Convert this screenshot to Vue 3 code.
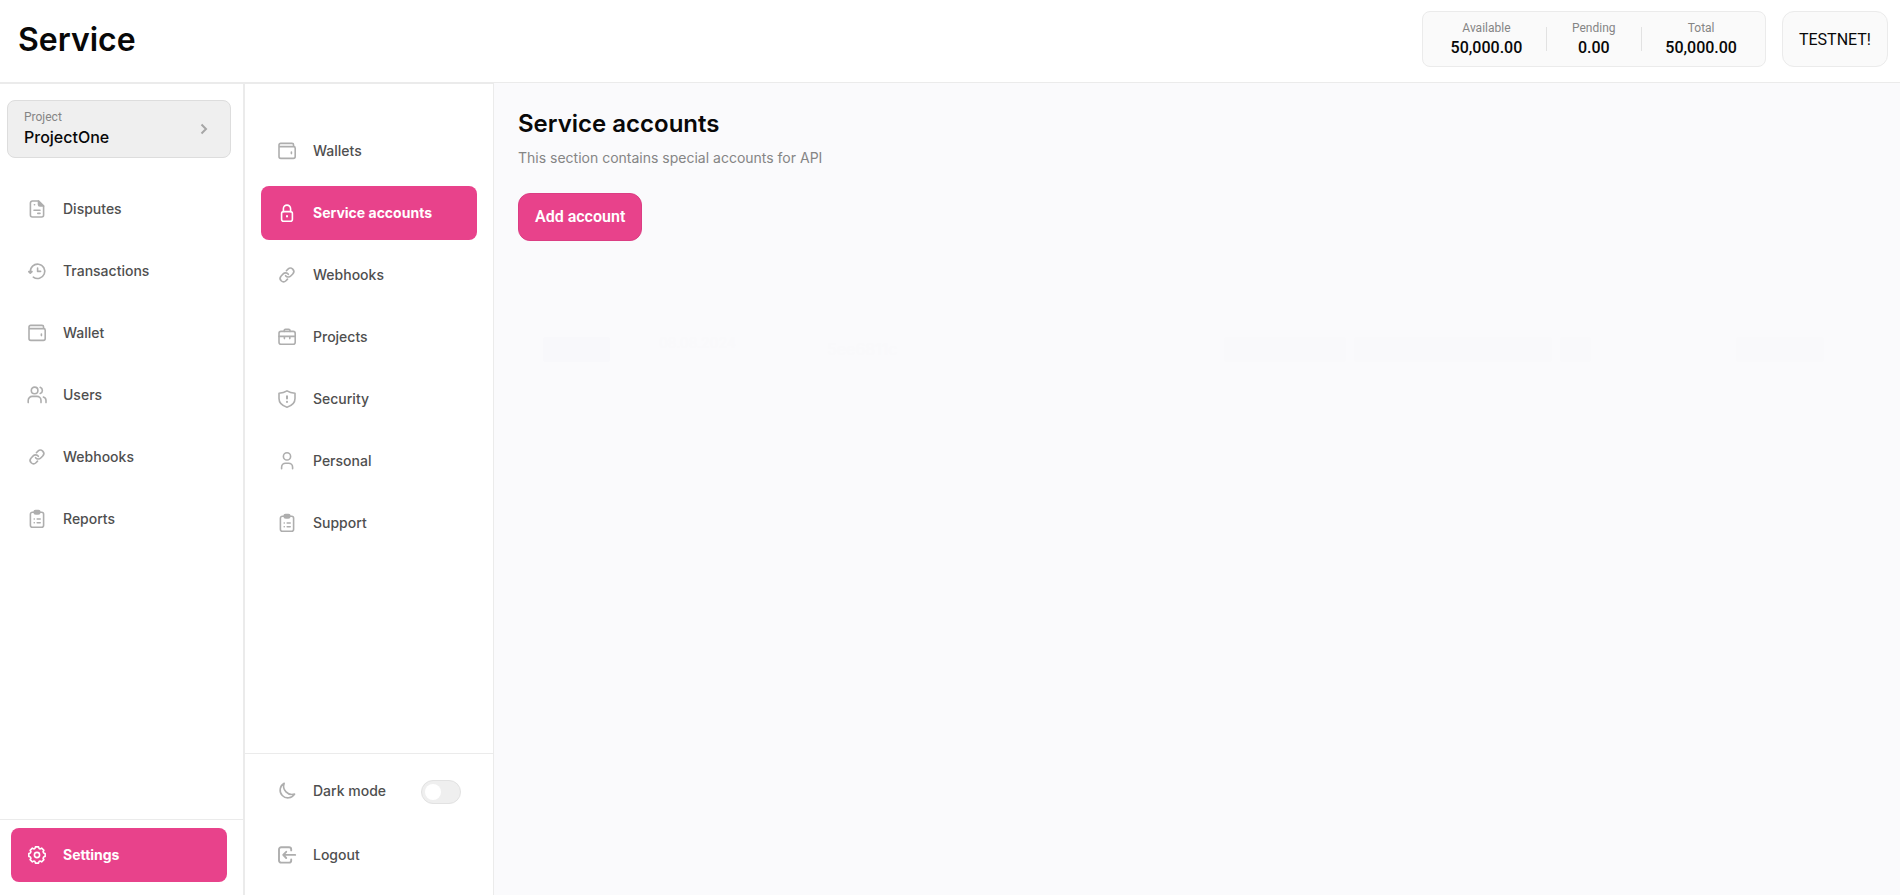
<script setup>
import { ref } from 'vue'

const gearRim = (() => {
  const points = []
  for (let tooth = 0; tooth < 8; tooth++) {
    for (const [offset, radius] of [[-17, 6.9], [-11, 8.3], [11, 8.3], [17, 6.9]]) {
      const angle = ((tooth * 45 + offset) * Math.PI) / 180
      points.push(`${(10 + radius * Math.sin(angle)).toFixed(2)} ${(10 - radius * Math.cos(angle)).toFixed(2)}`)
    }
  }
  return `M${points.join('L')}z`
})()

const icons = {
  file: '<path d="M11.5 2H5.4a2 2 0 0 0-2 2v12a2 2 0 0 0 2 2h9.2a2 2 0 0 0 2-2V7z"/><path d="M11.5 2v3.6A1.4 1.4 0 0 0 12.9 7h3.7z" fill="currentColor"/><path d="M7.4 5.8h.2M7 11.2h6M10.8 14.4H13"/>',
  history: '<path d="M3.4 11a7.2 7.2 0 1 1 2.9 5.1"/><path d="M1.8 10.6 3.3 12.2 5 10.6z" fill="currentColor"/><path d="M10.6 7v3.4h3"/>',
  wallet: '<path d="M16.6 5.6V4A1.6 1.6 0 0 0 15 2.4H3.6A1.6 1.6 0 0 0 2 4v11.6a1.8 1.8 0 0 0 1.8 1.8h12.6a1.8 1.8 0 0 0 1.8-1.8V7.2a1.6 1.6 0 0 0-1.6-1.6H2.2"/><path d="M14.4 11v1.6"/>',
  users: '<circle cx="7.6" cy="5.4" r="3.3"/><path d="M1.2 17.6v-2.2a4 4 0 0 1 4-4H10a4 4 0 0 1 4 4v2.2M13.2 2.3a3.3 3.3 0 0 1 0 6.2M16.4 12a3.8 3.8 0 0 1 2.6 3.6v2"/>',
  link: '<g transform="translate(1.8 1.8) scale(.68)" stroke-width="2.4"><path d="M10 13a5 5 0 0 0 7.54.54l3-3a5 5 0 0 0-7.07-7.07l-2.3 2.3"/><path d="M14 11a5 5 0 0 0-7.54-.54l-3 3a5 5 0 0 0 7.07 7.07l2.3-2.3"/></g>',
  clipboard: '<path d="M7 3.2H5.4a2 2 0 0 0-2 2v11a2 2 0 0 0 2 2h9.2a2 2 0 0 0 2-2v-11a2 2 0 0 0-2-2H13"/><path d="M7.2 2.8c0-.8.5-1.2 1.3-1.2h3c.8 0 1.3.4 1.3 1.2v.6c0 1-.7 1.6-1.6 1.6H8.8c-.9 0-1.6-.6-1.6-1.6z" fill="currentColor"/><path d="M7.2 10h.1M10.2 10h3M7.2 13.8h.1M10.2 13.8h3"/>',
  lock: '<rect x="4.6" y="8.6" width="10.8" height="9.6" rx="2"/><path d="M6.4 8.6V5.7a3.6 3.6 0 0 1 7.2 0v2.9"/><path d="M10 13v.6" stroke-width="2"/>',
  briefcase: '<rect x="2" y="4.4" width="16.2" height="12.8" rx="2"/><path d="M7.2 4.4v-.8c0-.8.5-1.3 1.3-1.3h3.2c.8 0 1.3.5 1.3 1.3v.8M2 9.4h16M7.4 10v1.6M12.8 10v1.6"/>',
  shield: '<path d="M10 1.8c2.2 1.4 5 2.2 8 2.4v5.4c0 4.1-3.3 7.3-8 8.6-4.7-1.3-8-4.5-8-8.6V4.2c3-.2 5.8-1 8-2.4z"/><path d="M10 7.2v2.2M10 12.8v.1" stroke-width="2"/>',
  person: '<circle cx="10" cy="5.4" r="3.6"/><path d="M4.6 17.8v-1.6a4 4 0 0 1 4-4h3a4 4 0 0 1 4 4v1.6"/>',
  gear: `<circle cx="10" cy="10" r="2.6"/><path d="${gearRim}"/>`,
  moon: '<path d="M7.2 2.2a7.8 7.8 0 1 0 10.4 10.9A8.4 8.4 0 0 1 7.2 2.2z"/>',
  logout: '<path d="M14.2 5.4V4.4a2.2 2.2 0 0 0-2.2-2.2H4.2A2.2 2.2 0 0 0 2 4.4v11a2.2 2.2 0 0 0 2.2 2.2H12a2.2 2.2 0 0 0 2.2-2.2v-1M6.6 9.9h11.6M9.2 6.8 6.2 9.9l3 3.1" stroke-width="1.9"/>'
}
const mainNav = [['Disputes', 'file'], ['Transactions', 'history'], ['Wallet', 'wallet'], ['Users', 'users'], ['Webhooks', 'link'], ['Reports', 'clipboard']]
const subNav = [['Wallets', 'wallet'], ['Service accounts', 'lock'], ['Webhooks', 'link'], ['Projects', 'briefcase'], ['Security', 'shield'], ['Personal', 'person'], ['Support', 'clipboard']]
const balances = [['Available', '50,000.00'], ['Pending', '0.00'], ['Total', '50,000.00']]
const dark = ref(false)
</script>

<template>
  <div class="app">
    <header class="top">
      <h1>Service</h1>
      <dl class="balances">
        <div v-for="[name, amount] in balances" :key="name" class="balance">
          <dt>{{ name }}</dt>
          <dd>{{ amount }}</dd>
        </div>
      </dl>
      <div class="network">TESTNET!</div>
    </header>
    <div class="body">
      <aside class="side main-side">
        <button class="project" type="button">
          <span><small>Project</small><b>ProjectOne</b></span>
          <svg width="8" height="12" viewBox="0 0 8 12"><path d="m1.5 1.5 4.5 4.5-4.5 4.5" /></svg>
        </button>
        <nav class="nav">
          <a v-for="[label, icon] in mainNav" :key="label" class="item" href="#">
            <svg class="icon" viewBox="0 0 20 20" v-html="icons[icon]"></svg>{{ label }}
          </a>
        </nav>
        <div class="foot">
          <a class="item active" href="#"><svg class="icon" viewBox="0 0 20 20" v-html="icons.gear"></svg>Settings</a>
        </div>
      </aside>
      <aside class="side sub-side">
        <nav class="nav">
          <a v-for="[label, icon] in subNav" :key="label" class="item" :class="{ active: icon === 'lock' }" href="#">
            <svg class="icon" viewBox="0 0 20 20" v-html="icons[icon]"></svg>{{ label }}
          </a>
        </nav>
        <div class="foot">
          <label class="item"><svg class="icon" viewBox="0 0 20 20" v-html="icons.moon"></svg>Dark mode<input v-model="dark" class="switch" type="checkbox" role="switch" /></label>
          <button class="item" type="button"><svg class="icon" viewBox="0 0 20 20" v-html="icons.logout"></svg>Logout</button>
        </div>
      </aside>
      <main class="content">
        <h2>Service accounts</h2>
        <p>This section contains special accounts for API</p>
        <button class="add" type="button">Add account</button>
        <div class="fading">
          <i class="bar status"></i>
          <span class="date">08.08.2024</span>
          <span>5ee6811c</span>
          <div class="bars"><i class="bar mid"></i><i class="bar long"></i><i class="bar tiny"></i></div>
          <i class="bar end"></i>
        </div>
      </main>
    </div>
  </div>
</template>

<style>
body { margin: 0; }
</style>
<style scoped>
* { box-sizing: border-box; }
.app { display: flex; flex-direction: column; min-height: 100vh; background: #fff; color: #080808; font-family: Inter, sans-serif; }
h1, h2, p, dl, dd { margin: 0; }
button { font-family: inherit; }
.top { display: flex; align-items: center; gap: 16px; height: 83px; padding: 0 12px 4px 18px; border-bottom: 1px solid #ebebeb; }
h1 { margin-right: auto; padding-top: 2px; font: 600 32px/40px Inter, sans-serif; }
.balances { display: flex; align-items: center; height: 56px; padding: 2px 4px 0; border: 1px solid #ebebeb; border-radius: 8px; background: #fafafa; }
.balance { padding: 0 24px; text-align: center; position: relative; }
.balance + .balance::before { content: ""; position: absolute; left: 0; top: 7px; height: 24px; border-left: 1px solid #e2e2e2; }
dt { color: #858585; font: 400 12px/16px Roboto, sans-serif; }
.balance:nth-child(2) { min-width: 95px; }
dd { font: 500 16px/24px Roboto, sans-serif; }
.network { height: 56px; padding: 2px 16px 0; border: 1px solid #ebebeb; border-radius: 12px; background: #fafafa; font: 400 16px/52px Roboto, sans-serif; }
.body { display: flex; flex: 1; }
.side { display: flex; flex-direction: column; flex: none; }
.main-side { width: 245px; border-top: 1px solid #ebebeb; border-right: 2px solid #ebebeb; }
.sub-side { width: 249px; border-top: 1px solid #ebebeb; border-right: 1px solid #ebebeb; }
.project { display: flex; align-items: center; justify-content: space-between; height: 58px; margin: 16px 12px 0 7px; padding: 0 22px 0 16px; border: 1px solid #ddd; border-radius: 8px; background: #efefef; color: #080808; text-align: left; }
.project small, .project b { display: block; }
.project small { color: #858585; font: 400 12px/16px Roboto, sans-serif; }
.project b { font: 500 16px/24px Inter, sans-serif; }
.project svg { fill: none; stroke: #a6a6a6; stroke-width: 2; }
.nav { display: flex; flex-direction: column; gap: 8px; padding: 24px 16px 0 11px; }
.sub-side .nav { padding: 40px 16px 0; }
.item { display: flex; align-items: center; gap: 16px; height: 54px; width: 100%; padding: 0 16px; border: 0; border-radius: 8px; background: none; color: #4f4f4f; font: 500 14px/20px Inter, sans-serif; text-decoration: none; }
.icon { width: 20px; height: 20px; flex: none; color: #aeaeae; fill: none; stroke: currentColor; stroke-width: 1.6; stroke-linecap: round; stroke-linejoin: round; }
.active { background: #e8428b; color: #fff; font-weight: 700; }
.active .icon { color: #fff; }
.foot { margin-top: auto; padding: 8px 16px 13px 11px; border-top: 1px solid #ebebeb; }
.sub-side .foot { display: flex; flex-direction: column; gap: 10px; padding: 10px 16px 13px; }
.switch { appearance: none; width: 40px; height: 24px; margin: 2px 0 0 auto; padding: 3px; border: 1px solid #e2e2e2; border-radius: 12px; background: #efefef; }
.switch::before { content: ""; display: block; width: 16px; height: 16px; border-radius: 50%; background: #fff; }
.switch:checked::before { margin-left: auto; }
.content { flex: 1; min-width: 0; padding: 25px 24px 24px; background: #fafafc; }
h2 { font: 600 24px/32px Inter, sans-serif; }
p { margin-top: 8px; color: #858585; font: 400 14px/20px Inter, sans-serif; }
.add { height: 48px; margin-top: 25px; padding: 0 16px; border: 1px solid #db3d83; border-radius: 12px; background: #e8428b; color: #fff; font: 600 16px/24px Roboto, sans-serif; }
.fading { display: grid; grid-template-columns: 116px 168px 397fr 512fr 140px; align-items: center; height: 40px; margin-top: 88px; padding-left: 25px; color: #f9f9fb; font: 400 16px/20px Inter, sans-serif; }
.date { align-self: start; padding-top: 4px; font-size: 14px; }
.bars { display: flex; gap: 8px; }
.bar { height: 25px; border-radius: 3px; background: #f9f9fb; }
.status { width: 67px; background: #f8f8fb; }
.mid { width: 122px; }
.long { width: 198px; }
.tiny { width: 31px; }
.end { width: 88px; }
</style>
